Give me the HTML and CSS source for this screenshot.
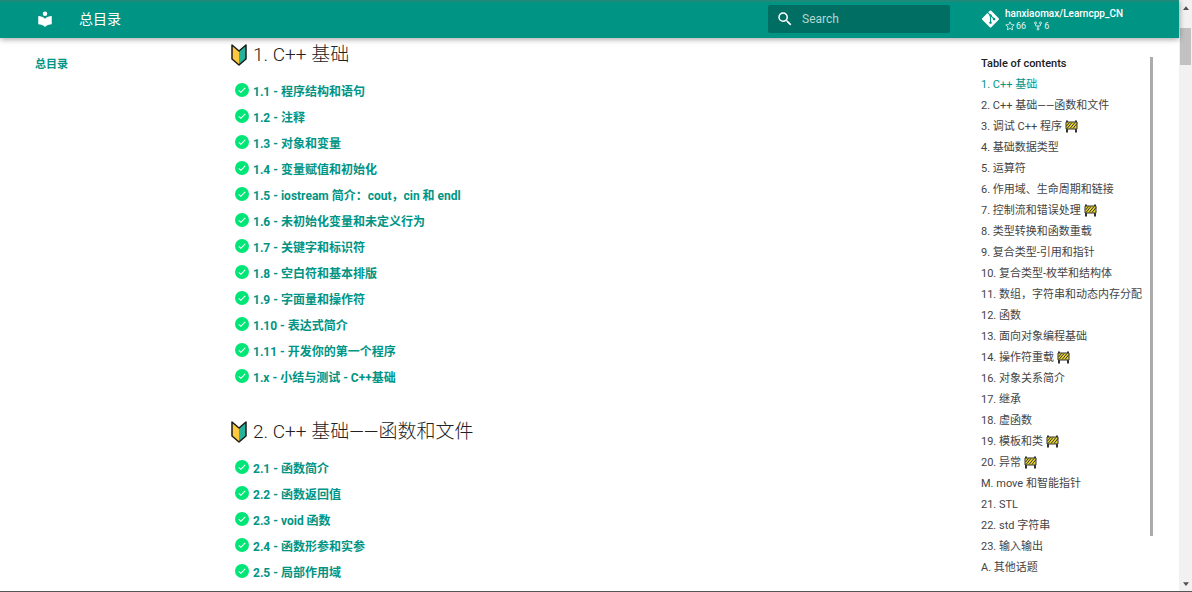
FILE: index.html
```html
<!DOCTYPE html>
<html lang="zh-CN">
<head>
    <meta charset="UTF-8">
    <meta name="viewport" content="width=device-width, initial-scale=1.0">
    <title>总目录</title>
    <link rel="stylesheet" href="styles.css">
</head>
<body>

    <!-- Shared icons -->
    <svg class="sprite" aria-hidden="true">
        <symbol id="check" viewBox="0 0 24 24">
            <circle cx="12" cy="12" r="12" fill="#00e676"/>
            <path d="M6.5 12.5l3.6 3.5 7.4-7.8" fill="none" stroke="#fff" stroke-width="1.9"/>
        </symbol>
        <symbol id="beginner" viewBox="0 0 16 22">
            <path d="M1 1l7 6v14l-7-6z" fill="#ffc83d"/>
            <path d="M15 1L8 7v14l7-6z" fill="#26b29a"/>
            <path d="M1 1l7 6 7-6v14l-7 6-7-6z" fill="none" stroke="#1b1b1b" stroke-width="1.5" stroke-linejoin="round"/>
        </symbol>
        <symbol id="barrier" viewBox="0 0 26 26">
            <path d="M4 1v24M22 1v24" stroke="#333" stroke-width="4"/>
            <path d="M2 4h22v14H2z" fill="#e8d42a" stroke="#333" stroke-width="2"/>
            <path d="M3 12l6-7M4 17L14 5M10 17L20 5M16 17l8-10" stroke="#333" stroke-width="2"/>
        </symbol>
    </svg>

    <div class="page">
        <header class="header">
            <a class="logo" href="#" aria-label="总目录">
                <svg viewBox="0 0 24 24"><path d="M12 8a3 3 0 0 0 3-3 3 3 0 0 0-3-3 3 3 0 0 0-3 3 3 3 0 0 0 3 3m0 3.540C9.640 9.350 6.500 8 3 8v11c3.500 0 6.640 1.350 9 3.540 2.360-2.190 5.500-3.540 9-3.540V8c-3.500 0-6.640 1.350-9 3.540z"/></svg>
            </a>
            <span class="title">总目录</span>
            <label class="search">
                <svg viewBox="0 0 24 24"><path d="M9.500 3A6.500 6.500 0 0 1 16 9.500c0 1.610-.590 3.090-1.560 4.230l.270.270h.790l5 5-1.500 1.500-5-5v-.790l-.270-.270A6.516 6.516 0 0 1 9.500 16 6.500 6.500 0 0 1 3 9.500 6.500 6.500 0 0 1 9.500 3m0 2C7 5 5 7 5 9.500S7 14 9.500 14 14 12 14 9.500 12 5 9.500 5z"/></svg>
                <input type="text" placeholder="Search" aria-label="Search">
            </label>
            <a class="repo" href="#">
                <svg class="git" viewBox="0 0 448 512"><path d="M439.550 236.050L244 40.450a28.870 28.870 0 0 0-40.810 0l-40.660 40.630 51.520 51.520c27.060-9.140 52.680 16.770 43.390 43.680l49.660 49.660c34.230-11.800 61.180 31 35.470 56.690-26.490 26.490-70.210-2.870-56-37.340L240.220 199v121.850c25.300 12.540 22.260 41.850 9.080 55a34.340 34.340 0 0 1-48.550 0c-17.570-17.600-11.070-46.910 11.250-56v-123c-20.800-8.510-24.600-30.740-18.640-45L142.570 101 8.450 235.140a28.860 28.860 0 0 0 0 40.810l195.610 195.600a28.860 28.860 0 0 0 40.800 0l194.690-194.690a28.860 28.860 0 0 0 0-40.810z"/></svg>
                <span class="repo-info">
                    <span class="repo-name">hanxiaomax/Learncpp_CN</span>
                    <span class="facts">
                        <svg viewBox="0 0 16 16"><path d="M8 1.300l2 4.400 4.800.500-3.600 3.200 1 4.800L8 11.800l-4.200 2.400 1-4.800L1.200 6.200 6 5.700z" fill="none" stroke="currentColor" stroke-width="1.300"/></svg>
                        <span class="stars">66</span>
                        <svg viewBox="0 0 16 16"><path d="M4 5v1.500c0 1 .500 1.500 1.500 1.500h5c1 0 1.500-.500 1.500-1.500V5M8 8v3" fill="none" stroke="currentColor" stroke-width="1.500"/><g fill="none" stroke="currentColor" stroke-width="1.400"><circle cx="4" cy="3.200" r="1.600"/><circle cx="12" cy="3.200" r="1.600"/><circle cx="8" cy="12.800" r="1.600"/></g></svg>
                        <span>6</span>
                    </span>
                </span>
            </a>
        </header>

        <div class="container">
            <nav class="nav"><a href="#">总目录</a></nav>

            <main class="content">
                <h2><svg><use href="#beginner"/></svg>1. C++ 基础</h2>
                <ul>
                    <li><svg><use href="#check"/></svg><a href="#">1.1 - 程序结构和语句</a></li>
                    <li><svg><use href="#check"/></svg><a href="#">1.2 - 注释</a></li>
                    <li><svg><use href="#check"/></svg><a href="#">1.3 - 对象和变量</a></li>
                    <li><svg><use href="#check"/></svg><a href="#">1.4 - 变量赋值和初始化</a></li>
                    <li><svg><use href="#check"/></svg><a href="#">1.5 - iostream 简介：cout，cin 和 endl</a></li>
                    <li><svg><use href="#check"/></svg><a href="#">1.6 - 未初始化变量和未定义行为</a></li>
                    <li><svg><use href="#check"/></svg><a href="#">1.7 - 关键字和标识符</a></li>
                    <li><svg><use href="#check"/></svg><a href="#">1.8 - 空白符和基本排版</a></li>
                    <li><svg><use href="#check"/></svg><a href="#">1.9 - 字面量和操作符</a></li>
                    <li><svg><use href="#check"/></svg><a href="#">1.10 - 表达式简介</a></li>
                    <li><svg><use href="#check"/></svg><a href="#">1.11 - 开发你的第一个程序</a></li>
                    <li><svg><use href="#check"/></svg><a href="#">1.x - 小结与测试 - C++基础</a></li>
                </ul>

                <h2><svg><use href="#beginner"/></svg>2. C++ 基础——函数和文件</h2>
                <ul>
                    <li><svg><use href="#check"/></svg><a href="#">2.1 - 函数简介</a></li>
                    <li><svg><use href="#check"/></svg><a href="#">2.2 - 函数返回值</a></li>
                    <li><svg><use href="#check"/></svg><a href="#">2.3 - void 函数</a></li>
                    <li><svg><use href="#check"/></svg><a href="#">2.4 - 函数形参和实参</a></li>
                    <li><svg><use href="#check"/></svg><a href="#">2.5 - 局部作用域</a></li>
                </ul>
            </main>

            <nav class="toc" aria-label="Table of contents">
                <div class="toc-list">
                    <strong>Table of contents</strong>
                    <a class="active" href="#">1. C++ 基础</a>
                    <a href="#">2. C++ 基础——函数和文件</a>
                    <a href="#">3. 调试 C++ 程序 <svg><use href="#barrier"/></svg></a>
                    <a href="#">4. 基础数据类型</a>
                    <a href="#">5. 运算符</a>
                    <a href="#">6. 作用域、生命周期和链接</a>
                    <a href="#">7. 控制流和错误处理 <svg><use href="#barrier"/></svg></a>
                    <a href="#">8. 类型转换和函数重载</a>
                    <a href="#">9. 复合类型-引用和指针</a>
                    <a href="#">10. 复合类型-枚举和结构体</a>
                    <a href="#">11. 数组，字符串和动态内存分配</a>
                    <a href="#">12. 函数</a>
                    <a href="#">13. 面向对象编程基础</a>
                    <a href="#">14. 操作符重载 <svg><use href="#barrier"/></svg></a>
                    <a href="#">16. 对象关系简介</a>
                    <a href="#">17. 继承</a>
                    <a href="#">18. 虚函数</a>
                    <a href="#">19. 模板和类 <svg><use href="#barrier"/></svg></a>
                    <a href="#">20. 异常 <svg><use href="#barrier"/></svg></a>
                    <a href="#">M. move 和智能指针</a>
                    <a href="#">21. STL</a>
                    <a href="#">22. std 字符串</a>
                    <a href="#">23. 输入输出</a>
                    <a href="#">A. 其他话题</a>
                </div>
                <div class="toc-bar"></div>
            </nav>
        </div>
    </div>

    <!-- Window scrollbar -->
    <div class="scrollbar">
        <svg viewBox="0 0 8 5"><path d="M0 5l4-5 4 5z"/></svg>
        <div class="thumb"></div>
        <svg viewBox="0 0 8 5"><path d="M0 0l4 5 4-5z"/></svg>
    </div>

</body>
</html>
```
FILE: styles.css
```css
* {
    box-sizing: border-box;
}
body {
    margin: 0;
    height: 100vh;
    display: flex;
    overflow: hidden;
    border-bottom: 1px solid #555;
    background-color: #fff;
    color: #212121;
    font-family: Roboto, "Noto Sans CJK SC", sans-serif;
    font-size: 11px;
}
a {
    color: inherit;
    text-decoration: none;
}
.sprite {
    position: absolute;
    width: 0;
    height: 0;
}
.page {
    flex: 1;
    min-width: 0;
    display: flex;
    flex-direction: column;
}
/* Header */
.header {
    height: 38px;
    flex: none;
    display: flex;
    align-items: center;
    padding: 0 30px 2px 36px;
    border-top: 2px solid #1f8a79;
    background-color: #009485;
    color: #fff;
    box-shadow: 0 1px 6px rgba(0, 0, 0, 0.4);
    z-index: 1;
}
.header svg {
    fill: currentColor;
}
.logo svg {
    display: block;
    width: 18px;
    height: 18px;
}
.title {
    flex: 1;
    margin-left: 25px;
    font-size: 14px;
    font-weight: 400;
    line-height: 20px;
}
.search {
    width: 182px;
    height: 28px;
    display: flex;
    align-items: center;
    gap: 8px;
    padding: 0 8px;
    border-radius: 2px;
    background-color: #006e62;
}
.search svg {
    width: 18px;
    height: 18px;
    flex: none;
}
.search input {
    flex: 1;
    min-width: 0;
    padding: 0;
    border: none;
    outline: none;
    background: none;
    color: #fff;
    font-family: inherit;
    font-size: 12px;
}
.search input::placeholder {
    color: #b5d8d3;
}
.repo {
    width: 167px;
    display: flex;
    align-items: center;
    gap: 6px;
    margin-left: 32px;
}
.git {
    width: 17px;
    height: 20px;
}
.repo-info {
    display: flex;
    flex-direction: column;
}
.repo-name {
    font-size: 10px;
    font-weight: 500;
    line-height: 13px;
}
.facts {
    display: flex;
    align-items: center;
    gap: 1px;
    font-size: 9px;
    line-height: 12px;
    opacity: 0.9;
}
.facts svg {
    width: 10px;
    height: 10px;
}
.stars {
    margin-right: 6px;
}
/* Columns */
.container {
    display: grid;
    grid-template-columns: 196px 1fr 198px;
    padding-left: 35px;
}
.nav {
    padding-top: 17px;
    color: #009485;
    font-weight: 700;
    line-height: 20px;
}
.content h2 {
    display: flex;
    align-items: center;
    gap: 6px;
    margin: 2px 0 7px;
    font-size: 19px;
    font-weight: 300;
    line-height: 30px;
}
.content h2 svg {
    width: 16px;
    height: 22px;
}
.content ul {
    margin: 0 0 28px;
    padding: 0 0 0 4px;
    list-style: none;
}
.content li {
    display: flex;
    align-items: center;
    gap: 4px;
    height: 26px;
    color: #009485;
    font-size: 12px;
    font-weight: 700;
}
.content li svg {
    width: 14px;
    height: 14px;
}
/* Table of contents */
.toc {
    display: flex;
    justify-content: space-between;
    padding-right: 26px;
}
.toc-list {
    padding-top: 15px;
}
.toc-list strong,
.toc-list a {
    display: block;
    height: 21px;
    font-size: 11px;
    line-height: 21px;
    white-space: nowrap;
}
.toc-list strong {
    font-weight: 500;
}
.toc-list a {
    color: #444;
    font-weight: 400;
}
.toc-list .active {
    color: #009485;
}
.toc-list svg {
    width: 13px;
    height: 13px;
    vertical-align: -3px;
}
.toc-bar {
    width: 3px;
    height: 479px;
    margin-top: 19px;
    background-color: #ababab;
}
/* Scrollbar */
.scrollbar {
    width: 13px;
    display: flex;
    flex-direction: column;
    align-items: center;
    padding: 6px 0 5px;
    background-color: #f1f1f1;
}
.scrollbar svg {
    width: 6px;
    height: 4px;
    fill: #505050;
}
.thumb {
    width: 11px;
    height: 37px;
    margin: 18px 0 auto;
    background-color: #c1c1c1;
}
```
